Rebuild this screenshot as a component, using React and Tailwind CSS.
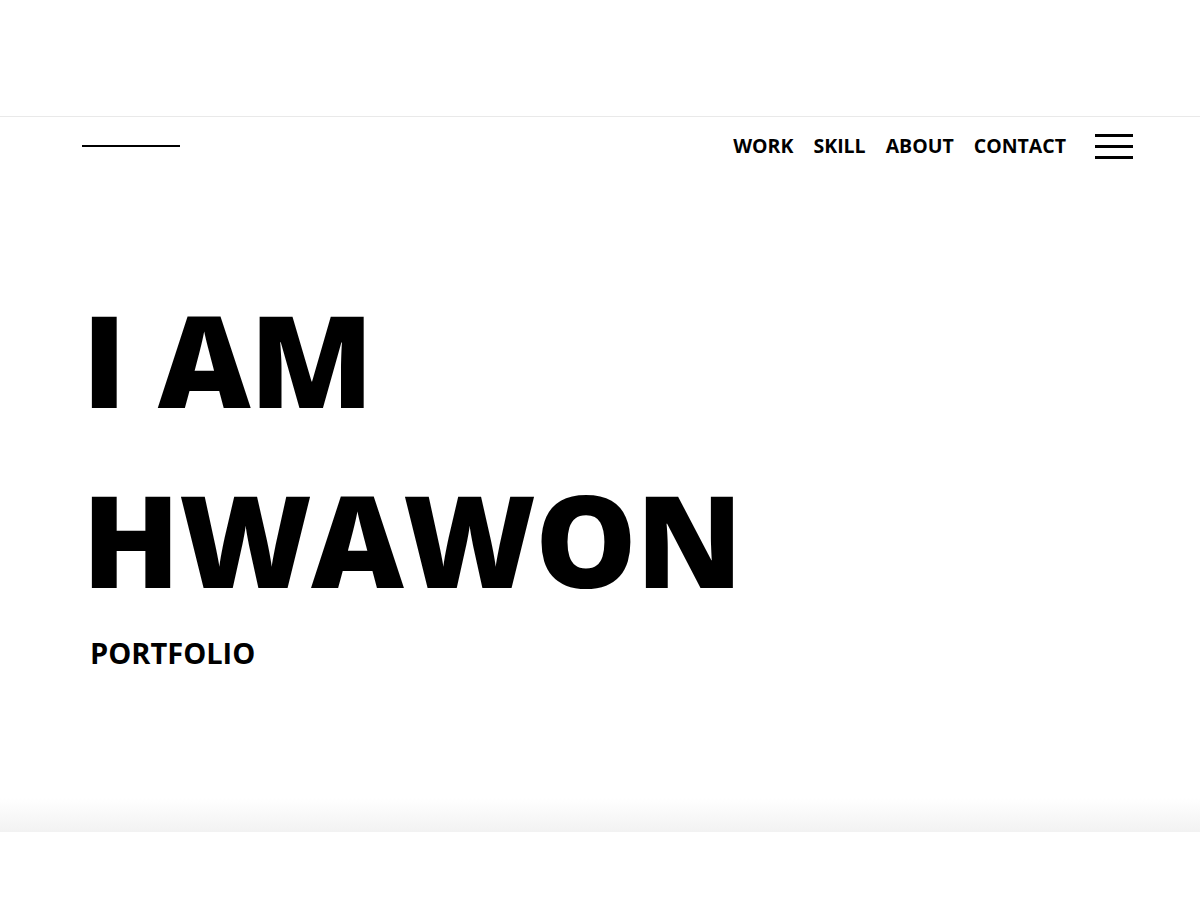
export default function App() {
  return (
    <div className="w-[1200px] h-[900px] bg-white overflow-hidden" style={{ fontFamily: '"Open Sans", sans-serif' }}>
      <div className="h-[116px]" />
      <div className="relative h-[716px] border-t border-[#e9e9e9] flex flex-col">
        <header className="flex items-center justify-between pl-[82px] pr-[67px] h-[58px]">
          <div className="w-[98px] h-[2px] bg-black" />
          <nav className="flex items-center">
            <ul className="flex items-center gap-[20px] text-[19.5px] font-bold text-black">
              <li>WORK</li>
              <li>SKILL</li>
              <li>ABOUT</li>
              <li>CONTACT</li>
            </ul>
            <div className="ml-[29px] flex flex-col gap-[8px] w-[38px]">
              <span className="block h-[3px] bg-black" />
              <span className="block h-[3px] bg-black" />
              <span className="block h-[3px] bg-black" />
            </div>
          </nav>
        </header>
        <main className="pl-[82px] pt-[94px]">
          <h1 className="text-[128px] leading-[180px] font-extrabold text-black tracking-[-1px]">
            I AM
            <br />
            HWAWON
          </h1>
          <p className="mt-[2px] text-[29px] font-bold text-black pl-[8px]">PORTFOLIO</p>
        </main>
        <div className="absolute bottom-0 left-0 right-0 h-[34px] bg-gradient-to-b from-white to-[#f2f2f2]" />
      </div>
    </div>
  );
}
